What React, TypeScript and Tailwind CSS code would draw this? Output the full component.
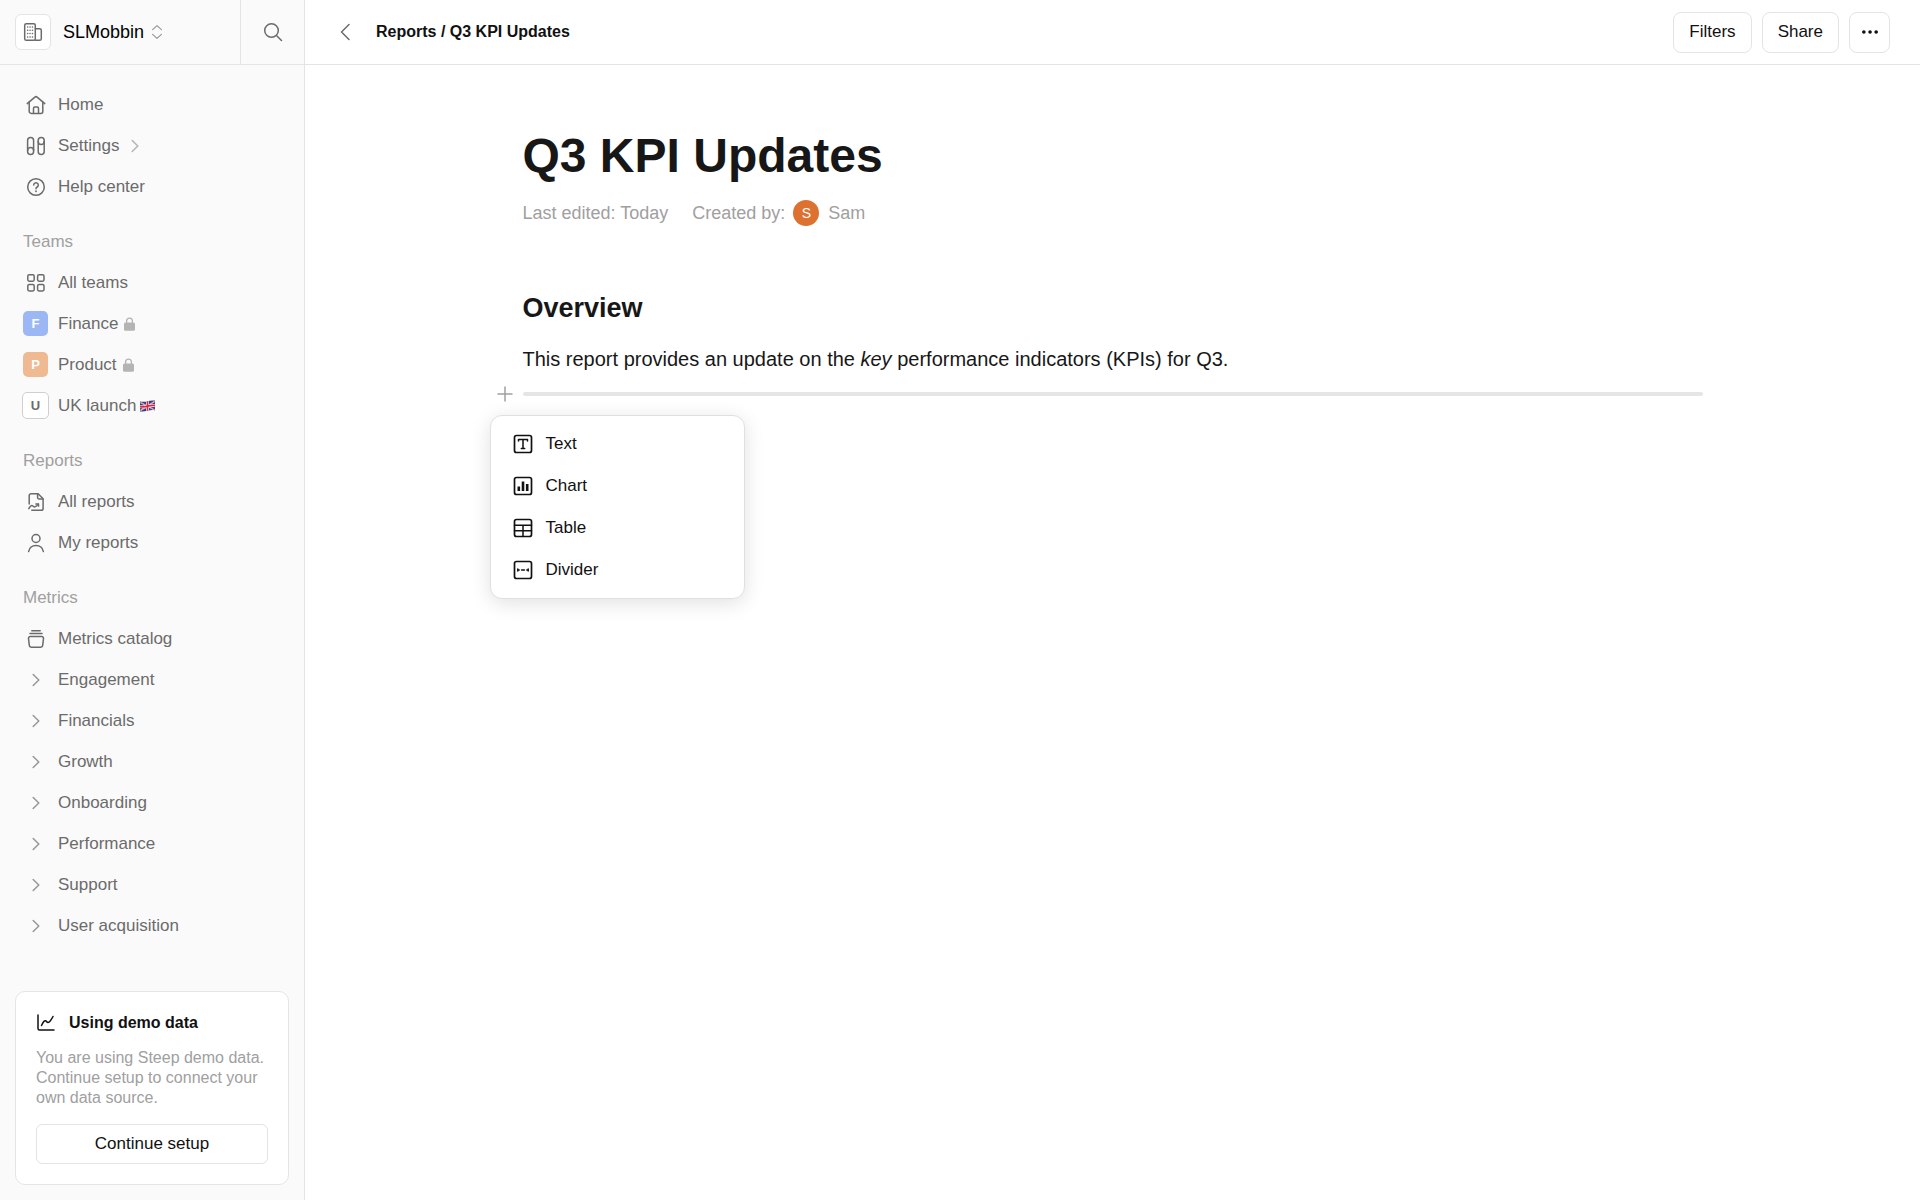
import type { ReactNode } from 'react'

interface IconProps {
  size?: number
  className?: string
  children: ReactNode
}

// Stroke icon on a 20 unit grid
function Icon({ size = 20, className = '', children }: IconProps) {
  return (
    <svg
      width={size}
      height={size}
      viewBox="0 0 20 20"
      fill="none"
      stroke="currentColor"
      strokeWidth="1.5"
      strokeLinecap="round"
      strokeLinejoin="round"
      aria-hidden="true"
      className={`shrink-0 ${className}`}>
      {children}
    </svg>
  )
}

const BuildingIcon = () => (
  <Icon className="text-[#6b6b6b]">
    <rect x="1.7" y="1.7" width="10.6" height="16.6" rx="1.6" />
    <path d="M12.3 6.7h4.4a1.6 1.6 0 0 1 1.6 1.6v8.4a1.6 1.6 0 0 1-1.6 1.6h-4.4" />
    <path d="M4.6 5h.1M7 5h.1M9.4 5h.1M4.6 8.3h.1M7 8.3h.1M9.4 8.3h.1M4.6 11.6h.1M7 11.6h.1M9.4 11.6h.1M4.6 15h.1M7 15h.1M9.4 15h.1" strokeWidth="1.5" />
  </Icon>
)

const HomeIcon = () => (
  <Icon>
    <path d="M1.2 8.6 8.9 2.1a1.7 1.7 0 0 1 2.2 0l7.7 6.5" />
    <path d="M3.2 7v9.4a2 2 0 0 0 2 2h9.6a2 2 0 0 0 2-2V7" />
    <path d="M7.5 18.2v-5a1.3 1.3 0 0 1 1.3-1.3h2.4a1.3 1.3 0 0 1 1.3 1.3v5" />
  </Icon>
)

const SettingsIcon = () => (
  <Icon>
    <rect x="1.6" y="1.6" width="6" height="16.8" rx="3" />
    <path d="M1.6 14.5a3 3 0 0 1 6 0" />
    <rect x="12.2" y="1.6" width="6" height="16.8" rx="3" />
    <path d="M12.2 5.5a3 3 0 0 0 6 0" />
  </Icon>
)

const HelpIcon = () => (
  <Icon>
    <circle cx="10" cy="10" r="8.3" />
    <path d="M7.7 8a2.3 2.3 0 1 1 3.5 2c-.8.5-1.2.9-1.2 1.7" />
    <path d="M10 14.2v.1" strokeWidth="1.8" />
  </Icon>
)

const GridIcon = () => (
  <Icon>
    <rect x="1.8" y="1.8" width="6.4" height="6.4" rx="1.4" />
    <rect x="11.6" y="1.8" width="6.4" height="6.4" rx="1.4" />
    <rect x="1.8" y="11.6" width="6.4" height="6.4" rx="1.4" />
    <rect x="11.6" y="11.6" width="6.4" height="6.4" rx="1.4" />
  </Icon>
)

const ReportIcon = () => (
  <Icon>
    <path d="M3.2 12V3.6a1.9 1.9 0 0 1 1.9-1.9h7l5 5v9.7a1.9 1.9 0 0 1-1.9 1.9H5.8" />
    <path d="M11.6 1.9v3.6a1.5 1.5 0 0 0 1.5 1.5h3.8" />
    <path d="M2.8 16.6c1.4-2.8 2.9-3.9 4.1-2.5 1.2 1.4 2.7 1.2 5.3-2" />
    <path d="M9.9 11.9h2.6v2.4" />
  </Icon>
)

const PersonIcon = () => (
  <Icon>
    <circle cx="10" cy="5.5" r="4" />
    <path d="M2.6 18.6c.9-4 3.8-6 7.4-6s6.5 2 7.4 6" />
  </Icon>
)

const CatalogIcon = () => (
  <Icon>
    <path d="M5.8 1.7h8.4M4 4.5h12" />
    <path d="M4.1 7.6h11.8a1.6 1.6 0 0 1 1.6 1.8l-.8 7a2 2 0 0 1-2 1.8H5.3a2 2 0 0 1-2-1.8l-.8-7a1.6 1.6 0 0 1 1.6-1.8Z" />
  </Icon>
)

const ChevronIcon = ({ className = 'text-[#979797]' }: { className?: string }) => (
  <Icon className={className}>
    <path d="m7.2 4.5 5.6 5.5-5.6 5.5" />
  </Icon>
)

const LockIcon = () => (
  <svg width="11" height="14" viewBox="0 0 11 14" aria-hidden="true" className="ml-[6px] text-[#b4b4b4]">
    <rect y="5.5" width="11" height="8.3" rx="1.6" fill="currentColor" />
    <path d="M2.6 6V4a2.9 2.9 0 0 1 5.8 0v2" fill="none" stroke="currentColor" strokeWidth="1.3" />
  </svg>
)

const FlagIcon = () => (
  <svg width="15" height="12" viewBox="0 0 15 12" role="img" aria-label="UK" className="ml-1">
    <path d="M0 1.5Q4 2.3 7.5 1.2T15 .6v9.6q-4-.4-7.5.6T0 11.4Z" fill="#39427f" />
    <path d="m.5 2.5 14 7.5M.5 10.5l14-9" stroke="#fff" strokeWidth="1.4" />
    <path d="m.5 2.5 14 7.5M.5 10.5l14-9" stroke="#cf2c45" strokeWidth=".5" />
    <path d="M0 6.5q4 .6 7.5-.3T15 5.5M7.5 1.2v9.6" stroke="#fff" strokeWidth="3" fill="none" />
    <path d="M0 6.5q4 .6 7.5-.3T15 5.5M7.5 1.2v9.6" stroke="#cf2c45" strokeWidth="1.8" fill="none" />
  </svg>
)

function Badge({ letter, className }: { letter: string; className: string }) {
  return (
    <span className={`flex items-center justify-center rounded-[5px] text-[13px] font-bold ${className}`}>
      {letter}
    </span>
  )
}

interface NavItem {
  label: string
  icon: ReactNode
  after?: ReactNode
}

const TOP: NavItem[] = [
  { label: 'Home', icon: <HomeIcon /> },
  { label: 'Settings', icon: <SettingsIcon />, after: <ChevronIcon className="ml-[6px] text-[#b4b4b4]" /> },
  { label: 'Help center', icon: <HelpIcon /> },
]

const TEAMS: NavItem[] = [
  { label: 'All teams', icon: <GridIcon /> },
  { label: 'Finance', icon: <Badge letter="F" className="size-[25px] bg-[#9bb8f5] text-white" />, after: <LockIcon /> },
  { label: 'Product', icon: <Badge letter="P" className="size-[25px] bg-[#efba92] text-white" />, after: <LockIcon /> },
  { label: 'UK launch', icon: <Badge letter="U" className="size-[27px] border border-[#cfcfcf] bg-white" />, after: <FlagIcon /> },
]

const REPORTS: NavItem[] = [
  { label: 'All reports', icon: <ReportIcon /> },
  { label: 'My reports', icon: <PersonIcon /> },
]

const METRICS: NavItem[] = [
  { label: 'Metrics catalog', icon: <CatalogIcon /> },
  ...['Engagement', 'Financials', 'Growth', 'Onboarding', 'Performance', 'Support', 'User acquisition'].map(label => ({
    label,
    icon: <ChevronIcon />,
  })),
]

function NavSection({ title, items }: { title?: string; items: NavItem[] }) {
  return (
    <section>
      {title && <h2 className="mt-[15px] flex h-10 items-center px-[23px] text-[#a0a0a0]">{title}</h2>}
      <ul>
        {items.map(item => (
          <li key={item.label}>
            <a href="#" className="flex h-[41px] items-center px-[22px] text-[#6b6b6b]">
              <span className="mr-[9px] flex w-[27px] justify-center">{item.icon}</span>
              {item.label}
              {item.after}
            </a>
          </li>
        ))}
      </ul>
    </section>
  )
}

function Sidebar() {
  return (
    <aside className="flex w-[305px] shrink-0 flex-col border-r border-[#e4e4e4] bg-[#fafafa]">
      <div className="flex h-[65px] border-b border-[#e4e4e4]">
        <button className="flex flex-1 items-center pl-[15px] text-[18px] text-black">
          <span className="mr-3 flex size-9 items-center justify-center rounded-md border border-[#e4e4e4] bg-white">
            <BuildingIcon />
          </span>
          SLMobbin
          <Icon size={16} className="ml-[5px] text-[#979797]">
            <path d="m4.5 7 5.5-5 5.5 5M4.5 13l5.5 5 5.5-5" />
          </Icon>
        </button>
        <button aria-label="Search" className="flex w-16 items-center justify-center border-l border-[#e4e4e4] text-[#6b6b6b]">
          <Icon>
            <circle cx="8.5" cy="8.5" r="6.8" />
            <path d="m13.5 13.5 5 5" />
          </Icon>
        </button>
      </div>

      <nav className="flex-1 pt-[19px]">
        <NavSection items={TOP} />
        <NavSection title="Teams" items={TEAMS} />
        <NavSection title="Reports" items={REPORTS} />
        <NavSection title="Metrics" items={METRICS} />
      </nav>

      {/* Demo data card */}
      <div className="mx-[15px] mb-[15px] rounded-[10px] border border-[#e4e4e4] bg-white p-5">
        <h3 className="flex h-[22px] items-center gap-[13px] text-[16px] font-bold text-[#111]">
          <Icon>
            <path d="M2 2v13.5A1.5 1.5 0 0 0 3.5 17H18" />
            <path d="M5.5 12.5c2-4.5 3.5-6 5-4s3 1.5 6.5-5" />
          </Icon>
          Using demo data
        </h3>
        <p className="mt-[14px] text-[16px] leading-5 text-[#a0a0a0]">
          You are using Steep demo data. Continue setup to connect your own data source.
        </p>
        <button className="mt-4 h-10 w-full rounded-md border border-[#e4e4e4] text-[#111]">Continue setup</button>
      </div>
    </aside>
  )
}

function TopBar() {
  return (
    <header className="flex h-[65px] items-center border-b border-[#e4e4e4] px-[30px]">
      <button aria-label="Back" className="text-[#6b6b6b]">
        <Icon>
          <path d="M14 2.5 6.5 10l7.5 7.5" />
        </Icon>
      </button>
      <div className="ml-[21px] flex-1 text-[16px] font-bold text-[#111]">Reports / Q3 KPI Updates</div>
      <div className="flex gap-[10px] text-[#111]">
        <button className="h-[41px] rounded-lg border border-[#e4e4e4] px-[15px]">Filters</button>
        <button className="h-[41px] rounded-lg border border-[#e4e4e4] px-[15px]">Share</button>
        <button aria-label="More" className="flex size-[41px] items-center justify-center rounded-lg border border-[#e4e4e4]">
          <Icon>
            <path d="M3.8 10h.1M10 10h.1M16.1 10h.1" strokeWidth="3.5" />
          </Icon>
        </button>
      </div>
    </header>
  )
}

const Frame = () => <rect x="1.5" y="1.5" width="17" height="17" rx="2" strokeWidth="1.7" />

const BLOCKS: NavItem[] = [
  {
    label: 'Text',
    icon: (
      <Icon>
        <Frame />
        <path d="M5.5 7V5.5h9V7M10 5.5v9M8.3 14.5h3.4" />
      </Icon>
    ),
  },
  {
    label: 'Chart',
    icon: (
      <Icon>
        <Frame />
        <path d="M5.8 10.5V15M10 5.5V15M14.2 8v7" strokeWidth="2.6" strokeLinecap="butt" />
      </Icon>
    ),
  },
  {
    label: 'Table',
    icon: (
      <Icon>
        <Frame />
        <path d="M1.5 7.2h17M1.5 12.8h17M10 7.2v11.3" />
      </Icon>
    ),
  },
  {
    label: 'Divider',
    icon: (
      <Icon>
        <Frame />
        <path d="M4.8 9v2M15.2 9v2M5 10h1.2M8.6 10h2.8M13.8 10H15" />
      </Icon>
    ),
  },
]

function BlockMenu() {
  return (
    <div
      role="menu"
      className="absolute top-[34px] left-0 w-[255px] rounded-xl border border-[#e0e0e0] bg-white py-[7px] shadow-[0_4px_20px_rgba(0,0,0,0.12)]">
      {BLOCKS.map(block => (
        <button key={block.label} role="menuitem" className="flex h-[42px] w-full items-center gap-[13px] px-[22px] text-[#111]">
          {block.icon}
          {block.label}
        </button>
      ))}
    </div>
  )
}

function Report() {
  return (
    <article className="mx-auto w-full max-w-[1180px] pt-14 text-[#171717]">
      <h1 className="text-[48px] leading-[70px] font-bold">Q3 KPI Updates</h1>
      <div className="mt-[9px] flex h-[26px] items-center text-[18px] text-[#a0a0a0]">
        <span>Last edited: Today</span>
        <span className="ml-6">Created by:</span>
        <span className="mr-[9px] ml-2 flex size-[26px] items-center justify-center rounded-full bg-[#dd7130] text-[14px] text-white">S</span>
        <span>Sam</span>
      </div>
      <h2 className="mt-[66px] text-[27px] leading-8 font-bold">Overview</h2>
      <p className="mt-5 text-[20px] leading-[30px]">
        This report provides an update on the <em>key</em> performance indicators (KPIs) for Q3.
      </p>
      <div className="relative mt-[7px] -ml-[33px] flex h-[26px] items-center">
        <button aria-label="Add block" className="mr-2 ml-[5px] text-[#a0a0a0]">
          <Icon>
            <path d="M10 3v14M3 10h14" />
          </Icon>
        </button>
        <hr className="h-1 flex-1 rounded-full border-0 bg-[#e5e5e5]" />
        <BlockMenu />
      </div>
    </article>
  )
}

export default function App() {
  return (
    <div className="flex min-h-screen bg-white font-['Liberation_Sans',Arial,sans-serif] text-[17px]">
      <Sidebar />
      <main className="min-w-0 flex-1">
        <TopBar />
        <Report />
      </main>
    </div>
  )
}
